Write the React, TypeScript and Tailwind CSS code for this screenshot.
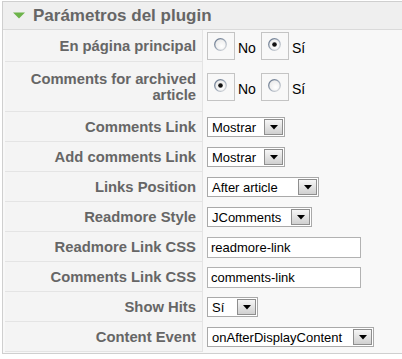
import type { ReactNode } from 'react';

/** Small XP style radio circle */
function Radio({ checked }: { checked: boolean }) {
  return (
    <svg width="13" height="13" viewBox="0 0 13 13">
      <defs>
        <linearGradient id="ring" x1="0" y1="0" x2="1" y2="1">
          <stop offset="0" stopColor="#5f6f86" />
          <stop offset="0.6" stopColor="#a9b3c0" />
          <stop offset="1" stopColor="#e2e2e2" />
        </linearGradient>
        <radialGradient id="fill" cx="0.6" cy="0.65" r="0.7">
          <stop offset="0" stopColor="#ffffff" />
          <stop offset="1" stopColor="#e8e8e8" />
        </radialGradient>
      </defs>
      <circle cx="6.5" cy="6.5" r="5.8" fill="url(#fill)" stroke="url(#ring)" strokeWidth="1.3" />
      {checked && <circle cx="6.5" cy="6.5" r="2.3" fill="#111" />}
    </svg>
  );
}

function RadioGroup({ yes }: { yes: boolean }) {
  const item = (label: string, on: boolean) => (
    <div className="flex items-end">
      <div className="w-[28px] h-[28px] border border-[#c4c4c4] pl-[6px] pt-[5px]">
        <Radio checked={on} />
      </div>
      <span className="ml-[3px] mb-[5px] text-[14px] leading-none text-black">{label}</span>
    </div>
  );
  return (
    <div className="flex items-end gap-[5px]">
      {item('No', !yes)}
      {item('Sí', yes)}
    </div>
  );
}

function Select({ value, className }: { value: string; className: string }) {
  return (
    <div className={`h-[20px] border border-[#a9a9a9] bg-white flex items-center ${className}`}>
      <span className="flex-1 pl-[4px] text-[13px] leading-none text-black whitespace-nowrap">{value}</span>
      <span className="mr-[1px] w-[19px] h-[16px] border border-[#8e8e8e] bg-gradient-to-b from-[#f6f6f6] to-[#d0d0d0] flex items-center justify-center">
        <svg width="8" height="5" viewBox="0 0 8 5">
          <polygon points="0,0 8,0 4,4.5" fill="#000" />
        </svg>
      </span>
    </div>
  );
}

function TextInput({ value }: { value: string }) {
  return (
    <div className="w-[154px] h-[21px] border border-[#b2b2b2] bg-white flex items-center pl-[3px] text-[13px] leading-none text-black">
      {value}
    </div>
  );
}

function Row({ label, height, children }: { label: ReactNode; height: string; children: ReactNode }) {
  return (
    <div className={`flex ${height}`}>
      <div className="w-[198px] shrink-0 bg-[#f4f4f4] border-b border-r border-[#e4e4e4] flex items-center justify-end pr-[6px] text-right text-[14.8px] leading-[16px] font-bold text-[#666]">
        {label}
      </div>
      <div className="flex-1 pl-[4px] flex items-center">{children}</div>
    </div>
  );
}

export default function App() {
  return (
    <div className="w-[402px] h-[359px] bg-white overflow-hidden pt-px pl-[2px]" style={{ fontFamily: '"Liberation Sans", Arial, sans-serif' }}>
      <div className="w-[420px] border border-[#cfcfcf] bg-[#f8f8f8] pb-[1px]">
        <div className="h-[28px] bg-[#efefef] border-b border-[#dadada] flex items-center pl-[10px]">
          <svg width="12" height="7" viewBox="0 0 12 7">
            <polygon points="0,0.5 12,0.5 6,6.5" fill="#6db34a" />
          </svg>
          <span className="ml-[8px] text-[17px] font-bold text-[#666]">Parámetros del plugin</span>
        </div>
        <div className="pl-[2px]">
          <Row label="En página principal" height="h-[32px]">
            <RadioGroup yes={true} />
          </Row>
          <Row label={<span>Comments for archived<br />article</span>} height="h-[50px]">
            <RadioGroup yes={false} />
          </Row>
          <Row label="Comments Link" height="h-[30px]">
            <Select value="Mostrar" className="w-[78px]" />
          </Row>
          <Row label="Add comments Link" height="h-[30px]">
            <Select value="Mostrar" className="w-[78px]" />
          </Row>
          <Row label="Links Position" height="h-[30px]">
            <Select value="After article" className="w-[112px]" />
          </Row>
          <Row label="Readmore Style" height="h-[30px]">
            <Select value="JComments" className="w-[105px]" />
          </Row>
          <Row label="Readmore Link CSS" height="h-[30px]">
            <TextInput value="readmore-link" />
          </Row>
          <Row label="Comments Link CSS" height="h-[30px]">
            <TextInput value="comments-link" />
          </Row>
          <Row label="Show Hits" height="h-[30px]">
            <Select value="Sí" className="w-[51px]" />
          </Row>
          <Row label="Content Event" height="h-[30px]">
            <Select value="onAfterDisplayContent" className="w-[167px]" />
          </Row>
        </div>
      </div>
    </div>
  );
}
